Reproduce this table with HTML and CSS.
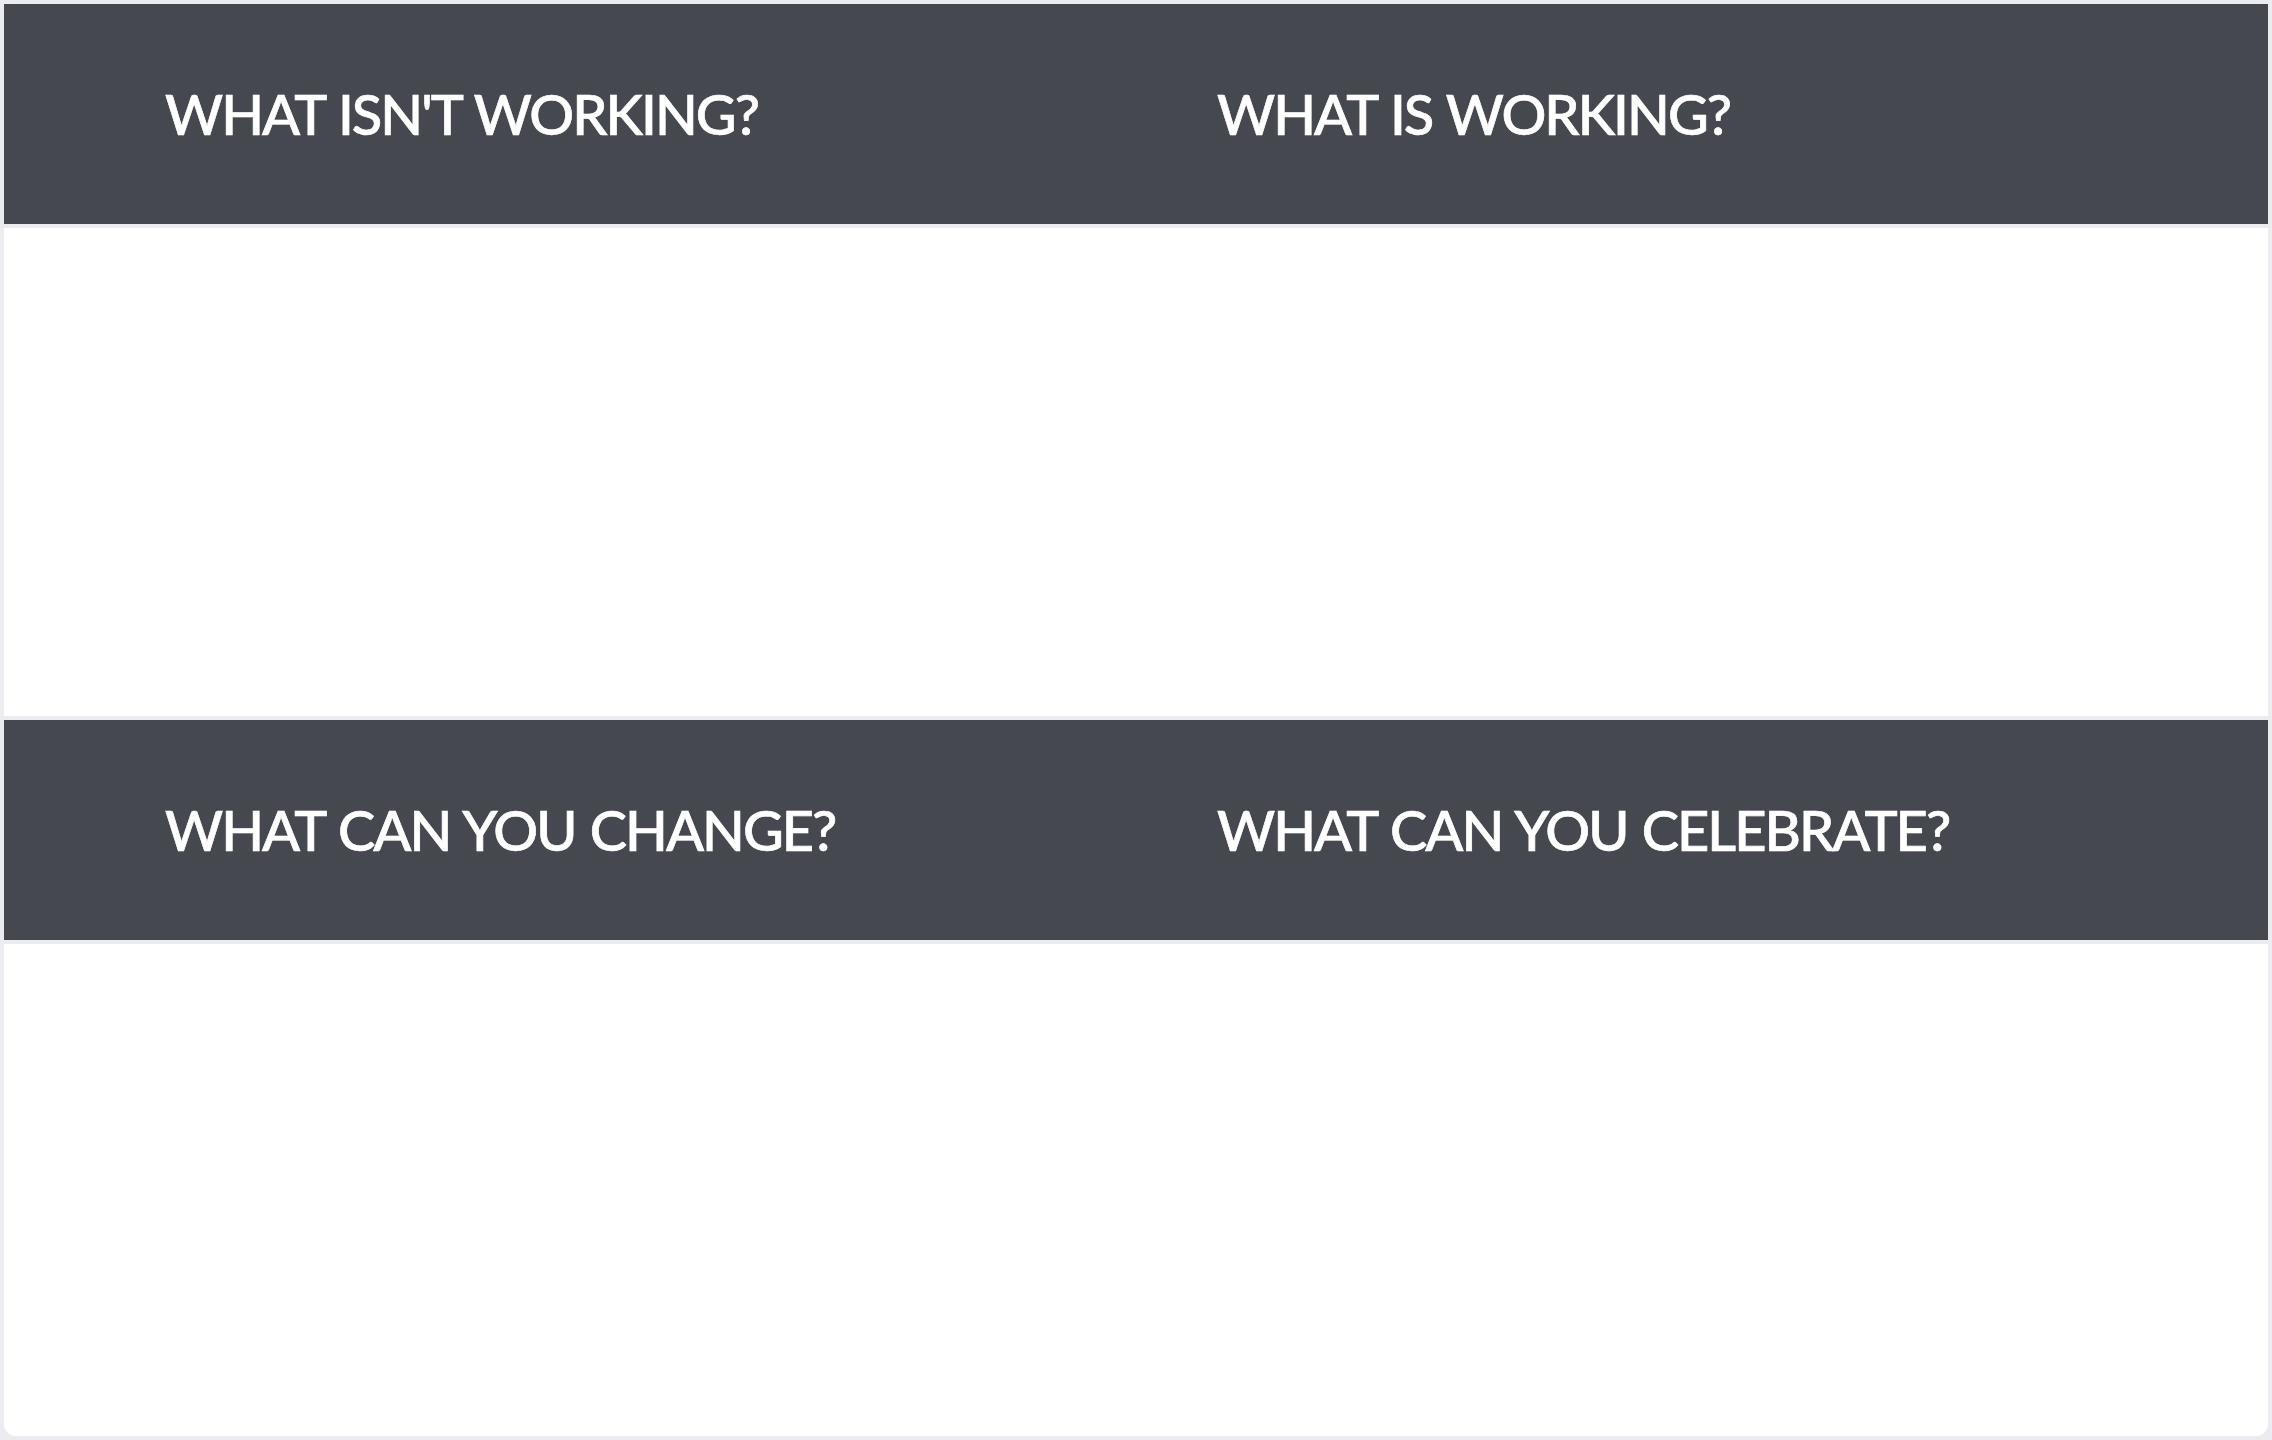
FILE: index.html
```html
<!DOCTYPE html>
<html lang="en">
<head>
<meta charset="utf-8">
<title>Retrospective board</title>
<link rel="stylesheet" href="styles.css">
</head>
<body>
<main class="board">
  <section class="band band--head">
    <h2 class="title title--left">WHAT ISN'T WORKING?</h2>
    <h2 class="title title--right">WHAT IS WORKING?</h2>
  </section>
  <section class="band band--body band--body-top"></section>
  <section class="band band--head">
    <h2 class="title title--left">WHAT CAN YOU CHANGE?</h2>
    <h2 class="title title--right">WHAT CAN YOU CELEBRATE?</h2>
  </section>
  <section class="band band--body band--body-bottom"></section>
</main>
</body>
</html>
```

FILE: styles.css
```css
html, body {
  margin: 0;
  padding: 0;
}
body {
  background: #eaecef;
  width: 2272px;
  height: 1440px;
  overflow: hidden;
  font-family: "Lato", "Liberation Sans", sans-serif;
}
.board {
  margin: 4px 4px 0 4px;
  display: flex;
  flex-direction: column;
  gap: 4px;
  border-radius: 0 0 12px 12px;
}
.band {
  display: grid;
  grid-template-columns: 1fr 1fr;
}
.band--head {
  height: 220px;
  background: #45484f;
  align-items: center;
}
.band--body {
  background: #ffffff;
}
.band--body-top {
  height: 488px;
}
.band--body-bottom {
  height: 492px;
  border-radius: 0 0 12px 12px;
}
.title {
  margin: 0;
  color: #ffffff;
  font-size: 56px;
  font-weight: 500;
  line-height: 1;
  letter-spacing: -2px;
  word-spacing: 2px;
  white-space: nowrap;
  -webkit-text-stroke: 0.7px #ffffff;
}
.title--left {
  padding-left: 161px;
}
.title--right {
  padding-left: 81px;
}
```
